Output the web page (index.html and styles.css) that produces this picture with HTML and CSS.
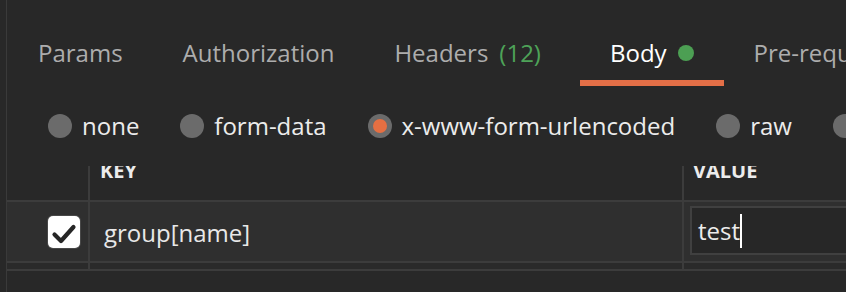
FILE: index.html
```html
<!DOCTYPE html>
<html lang="en">
<head>
<meta charset="utf-8">
<title>Request body</title>
<link rel="stylesheet" href="styles.css">
</head>
<body>
<div class="panel">
  <nav class="tabs">
    <div class="tab">Params</div>
    <div class="tab">Authorization</div>
    <div class="tab">Headers<span class="count">(12)</span></div>
    <div class="tab active">Body<span class="dot"></span></div>
    <div class="tab">Pre-request Script</div>
    <div class="tab">Tests</div>
  </nav>
  <div class="modes">
    <label class="mode"><span class="radio"></span>none</label>
    <label class="mode"><span class="radio"></span>form-data</label>
    <label class="mode"><span class="radio checked"></span>x-www-form-urlencoded</label>
    <label class="mode"><span class="radio"></span>raw</label>
    <label class="mode"><span class="radio"></span>binary</label>
  </div>
  <div class="table">
    <div class="table-inner">
      <div class="row head">
        <div class="cell c-check"></div>
        <div class="cell c-key">Key</div>
        <div class="cell c-value">Value</div>
      </div>
      <div class="row data">
        <div class="cell c-check">
          <span class="checkbox">
            <svg viewBox="0 0 32 32" width="32" height="32"><path d="M6.5 18.5 L13 25 L25.5 11" fill="none" stroke="#262626" stroke-width="4.2" stroke-linecap="round" stroke-linejoin="round"/></svg>
          </span>
        </div>
        <div class="cell c-key">group[name]</div>
        <div class="cell c-value">
          <div class="input">test<span class="caret"></span></div>
        </div>
      </div>
      <div class="row stub">
        <div class="cell c-check"></div>
        <div class="cell c-key"></div>
        <div class="cell c-value"></div>
      </div>
    </div>
  </div>
</div>
</body>
</html>
```

FILE: styles.css
```css
html, body {
  margin: 0;
  padding: 0;
  background: #282828;
}
body {
  width: 846px;
  height: 292px;
  overflow: hidden;
  font-family: "Open Sans", "Noto Sans", sans-serif;
  color: #e8e8e8;
}
.panel {
  margin-left: 6px;
  border-left: 1px solid #3a3a3a;
  height: 292px;
  overflow: hidden;
}
.tabs {
  display: flex;
  padding: 37px 0 0 1px;
  white-space: nowrap;
}
.tab {
  display: flex;
  align-items: center;
  flex: none;
  padding: 0 30px 11px;
  font-size: 24px;
  line-height: 32px;
  color: #adadad;
  border-bottom: 6px solid transparent;
}
.tab .count {
  color: #4ea358;
  margin-left: 11px;
}
.tab.active {
  color: #ffffff;
  border-bottom-color: #e36f47;
  margin-left: 9px;
}
.dot {
  width: 16px;
  height: 16px;
  border-radius: 50%;
  background: #4c9f53;
  margin-left: 11px;
}
.modes {
  display: flex;
  gap: 41px;
  padding: 24px 0 0 41px;
  white-space: nowrap;
}
.mode {
  display: flex;
  align-items: center;
  gap: 10px;
  font-size: 24px;
  line-height: 32px;
  color: #ececec;
  flex: none;
}
.radio {
  width: 24px;
  height: 24px;
  border-radius: 50%;
  background: #6b6b6b;
  display: flex;
  align-items: center;
  justify-content: center;
}
.radio.checked::after {
  content: "";
  width: 14px;
  height: 14px;
  border-radius: 50%;
  background: #e56f42;
}
.table {
  margin-top: 24px;
  height: 126px;
  overflow: hidden;
}
.table-inner {
  margin-top: -9px;
}
.row {
  display: flex;
  border-bottom: 2px solid #3c3c3c;
}
.cell {
  flex: none;
  display: flex;
  align-items: center;
  box-sizing: border-box;
}
.c-check {
  width: 83px;
  border-right: 2px solid #3c3c3c;
  justify-content: flex-end;
}
.c-key {
  width: 594px;
  border-right: 2px solid #3c3c3c;
}
.c-value {
  flex: 1;
}
.head {
  height: 43px;
}
.head .cell {
  align-items: flex-start;
  font-size: 20px;
  font-weight: 700;
  line-height: 27px;
  text-transform: uppercase;
  color: #ececec;
}
.head .c-key {
  padding-left: 10px;
}
.head .c-value {
  padding-left: 9px;
}
.data {
  height: 59px;
  background: #2f2f2f;
}
.data .c-check {
  padding-right: 8px;
}
.data .c-key {
  padding-left: 14px;
  padding-top: 2px;
  font-size: 24px;
  line-height: 32px;
}
.checkbox {
  width: 32px;
  height: 32px;
  border-radius: 5px;
  background: #ffffff;
  box-shadow: 0 0 0 1px #484848;
  display: flex;
}
.data .c-value {
  padding-left: 6px;
  align-items: flex-start;
  padding-top: 4px;
}
.input {
  flex: 1;
  height: 45px;
  border: 2px solid #404040;
  border-right: none;
  background: #272727;
  display: flex;
  align-items: center;
  padding-left: 6px;
  font-size: 24px;
  line-height: 32px;
  color: #ececec;
}
.caret {
  width: 2px;
  height: 34px;
  background: #ffffff;
}
.stub {
  height: 6px;
  background: #2a2a2a;
}
```
